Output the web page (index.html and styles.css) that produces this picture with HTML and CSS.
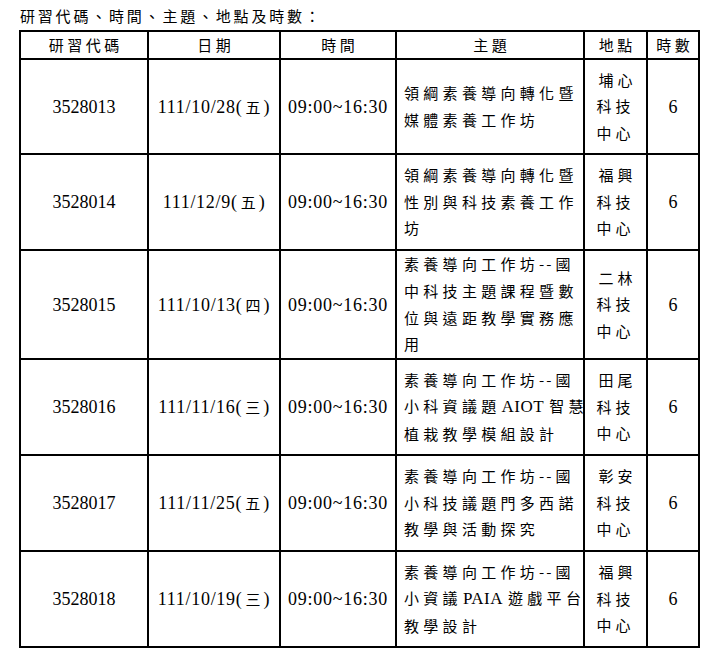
FILE: index.html
```html
<!DOCTYPE html>
<html lang="zh-Hant">
<head>
<meta charset="utf-8">
<title>研習代碼、時間、主題、地點及時數</title>
<link rel="stylesheet" href="styles.css">
</head>
<body>
<div class="page">
  <p class="title">研習代碼、時間、主題、地點及時數：</p>
  <table class="sched">
    <colgroup>
      <col class="c-code">
      <col class="c-date">
      <col class="c-time">
      <col class="c-topic">
      <col class="c-place">
      <col class="c-hours">
    </colgroup>
    <thead>
      <tr class="head">
        <th>研習代碼</th>
        <th>日期</th>
        <th>時間</th>
        <th>主題</th>
        <th>地點</th>
        <th>時數</th>
      </tr>
    </thead>
    <tbody>
      <tr class="row first">
        <td class="num">3528013</td>
        <td class="num date">111/10/28<span class="wd">(<b>五</b>)</span></td>
        <td class="num time">09:00~16:30</td>
        <td class="topic">領綱素養導向轉化暨<br>媒體素養工作坊</td>
        <td class="place">埔心<br>科技<br>中心</td>
        <td class="num">6</td>
      </tr>
      <tr class="row">
        <td class="num">3528014</td>
        <td class="num date">111/12/9<span class="wd">(<b>五</b>)</span></td>
        <td class="num time">09:00~16:30</td>
        <td class="topic">領綱素養導向轉化暨<br>性別與科技素養工作<br>坊</td>
        <td class="place">福興<br>科技<br>中心</td>
        <td class="num">6</td>
      </tr>
      <tr class="row tall">
        <td class="num">3528015</td>
        <td class="num date">111/10/13<span class="wd">(<b>四</b>)</span></td>
        <td class="num time">09:00~16:30</td>
        <td class="topic">素養導向工作坊<span class="dash">--</span>國<br>中科技主題課程暨數<br>位與遠距教學實務應<br>用</td>
        <td class="place">二林<br>科技<br>中心</td>
        <td class="num">6</td>
      </tr>
      <tr class="row">
        <td class="num">3528016</td>
        <td class="num date">111/11/16<span class="wd">(<b>三</b>)</span></td>
        <td class="num time">09:00~16:30</td>
        <td class="topic">素養導向工作坊<span class="dash">--</span>國<br>小科資議題<span class="latin">AIOT</span>智慧<br>植栽教學模組設計</td>
        <td class="place">田尾<br>科技<br>中心</td>
        <td class="num">6</td>
      </tr>
      <tr class="row">
        <td class="num">3528017</td>
        <td class="num date">111/11/25<span class="wd">(<b>五</b>)</span></td>
        <td class="num time">09:00~16:30</td>
        <td class="topic">素養導向工作坊<span class="dash">--</span>國<br>小科技議題門多西諾<br>教學與活動探究</td>
        <td class="place">彰安<br>科技<br>中心</td>
        <td class="num">6</td>
      </tr>
      <tr class="row">
        <td class="num">3528018</td>
        <td class="num date">111/10/19<span class="wd">(<b>三</b>)</span></td>
        <td class="num time">09:00~16:30</td>
        <td class="topic">素養導向工作坊<span class="dash">--</span>國<br>小資議<span class="latin">PAIA</span>遊戲平台<br>教學設計</td>
        <td class="place">福興<br>科技<br>中心</td>
        <td class="num">6</td>
      </tr>
    </tbody>
  </table>
</div>
</body>
</html>
```

FILE: styles.css
```css
html, body {
  margin: 0;
  padding: 0;
  background: #fff;
  color: #000;
}

.page {
  padding: 6px 0 0 19px;
  font-family: "Noto Sans CJK TC", "Noto Sans CJK SC", sans-serif;
  font-size: 15px;
}

.title {
  margin: 0 0 4px 1px;
  height: 20px;
  line-height: 20px;
  letter-spacing: 2.8px;
  white-space: nowrap;
}

.sched {
  width: 681px;
  table-layout: fixed;
  border-collapse: separate;
  border-spacing: 0;
  border-left: 2px solid #000;
  border-top: 2px solid #000;
}

.c-code { width: 128px; }
.c-date { width: 132px; }
.c-time { width: 116px; }
.c-topic { width: 188px; }
.c-place { width: 63px; }
.c-hours { width: 52px; }

.sched th,
.sched td {
  box-sizing: border-box;
  border-right: 2px solid #000;
  border-bottom: 2px solid #000;
  padding: 0;
  text-align: center;
  vertical-align: middle;
}

.sched th {
  font-weight: normal;
  letter-spacing: 3.5px;
  text-indent: 3.5px;
  line-height: 20px;
}

.head { height: 28px; }
.row { height: 96px; }
.row.first { height: 95px; }
.row.tall { height: 109px; }

.num {
  font-family: "Liberation Serif", "Noto Sans CJK TC", serif;
  font-size: 18px;
  line-height: 20px;
  white-space: nowrap;
}

.date { letter-spacing: 0.7px; }
.time { letter-spacing: 0.75px; }

.wd b {
  font-weight: normal;
  font-family: "Noto Sans CJK TC", sans-serif;
  font-size: 15px;
  margin: 0 3px;
  letter-spacing: 0;
}

.sched td.topic {
  text-align: left;
  padding: 0 2px 0 7px;
  letter-spacing: 4.3px;
  line-height: 26.6px;
  white-space: nowrap;
}

.dash {
  letter-spacing: 2px;
  margin-right: 2px;
}

.latin {
  font-family: "Liberation Serif", serif;
  font-size: 17px;
  letter-spacing: 0.5px;
  margin: 0 5px 0 1px;
}

.sched td.place {
  letter-spacing: 4px;
  text-indent: 4px;
  line-height: 26.6px;
}
```
